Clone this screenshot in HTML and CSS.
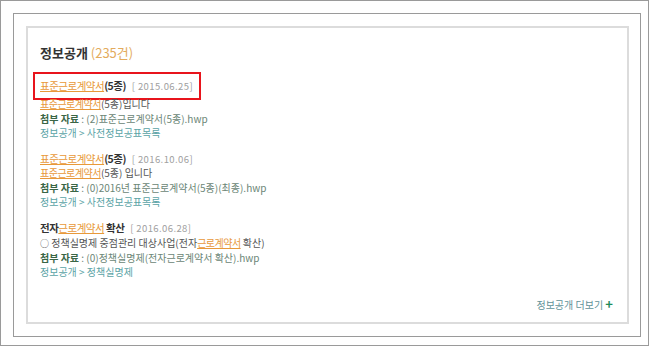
FILE: index.html
```html
<!DOCTYPE html>
<html>
<head lang="ko">
    <meta charset="UTF-8">
    <title>정보공개</title>
    <link rel="stylesheet" href="styles.css">
</head>
<body>
<div class="frame">
    <div class="frame2">
        <div class="panel">
            <h2 class="title">정보공개 <span class="count">(235건)</span></h2>

            <div class="item first">
                <p class="head boxed"><a href="#">표준근로계약서</a><b>(5종)</b> <span class="date">[ 2015.06.25]</span></p>
                <p class="desc"><a href="#">표준근로계약서</a>(5종)입니다</p>
                <p class="file"><b>첨부 자료</b> : (2)표준근로계약서(5종).hwp</p>
                <p class="path">정보공개 &gt; 사전정보공표목록</p>
            </div>

            <div class="item">
                <p class="head"><a href="#">표준근로계약서</a><b>(5종)</b> <span class="date">[ 2016.10.06]</span></p>
                <p class="desc"><a href="#">표준근로계약서</a>(5종) 입니다</p>
                <p class="file"><b>첨부 자료</b> : (0)2016년 표준근로계약서(5종)(최종).hwp</p>
                <p class="path">정보공개 &gt; 사전정보공표목록</p>
            </div>

            <div class="item">
                <p class="head"><b>전자</b><a href="#">근로계약서</a> <b>확산</b> <span class="date">[ 2016.06.28]</span></p>
                <p class="desc"><span class="dot">○</span> 정책실명제 중점관리 대상사업(전자<a href="#">근로계약서</a> 확산)</p>
                <p class="file"><b>첨부 자료</b> : (0)정책실명제(전자근로계약서 확산).hwp</p>
                <p class="path">정보공개 &gt; 정책실명제</p>
            </div>

            <div class="more"><a href="#">정보공개 더보기</a> <span class="plus">+</span></div>
        </div>
    </div>
</div>
</body>
</html>
```

FILE: styles.css
```css
*{
    padding: 0;
    margin: 0;
    box-sizing: border-box;
}
body{
    background: #fff;
    font-family: "Noto Sans CJK KR", "Noto Sans", sans-serif;
    font-size: 10px;
    color: #555;
}
a{
    color: #e8993a;
    text-decoration: underline;
}
.frame{
    width: 649px;
    height: 346px;
    border: 1px solid #9a9a9a;
    padding: 12px;
}
.frame2{
    width: 628px;
    height: 324px;
    border: 1px solid #9a9a9a;
    padding: 12px;
}
.panel{
    width: 603px;
    height: 298px;
    border: 2px solid #dcdcdc;
    padding: 16px 14px 0 12px;
}
.title{
    font-size: 13px;
    font-weight: bold;
    color: #333;
    line-height: 18px;
    margin-bottom: 10px;
}
.title .count{
    color: #e3ab5c;
    font-weight: normal;
}
.item{
    margin-bottom: 12px;
}
.item p{
    line-height: 14.3px;
    white-space: nowrap;
}
.head{
    font-size: 10.5px;
    letter-spacing: -0.5px;
}
.head b{
    color: #333;
}
.head .date{
    color: #a0a0a0;
    font-size: 9.5px;
    letter-spacing: 0.4px;
    margin-left: 4px;
}
.boxed{
    width: fit-content;
    border: 2px solid #e8141c;
    margin-left: -7px;
    padding: 5px 6px 5px 5px;
    margin-bottom: -3px;
}
.desc{
    color: #555;
}
.desc a{
    letter-spacing: -0.5px;
}
.dot{
    font-size: 9px;
}
.file{
    color: #6b8676;
}
.file b{
    color: #3a6646;
}
.path{
    color: #5aa3a6;
}
.more{
    text-align: right;
    margin-top: 17px;
    line-height: 14px;
}
.more a{
    color: #5f9298;
    text-decoration: none;
    font-size: 10px;
}
.more .plus{
    color: #1f8a5a;
    font-weight: bold;
    font-size: 13px;
}
```
